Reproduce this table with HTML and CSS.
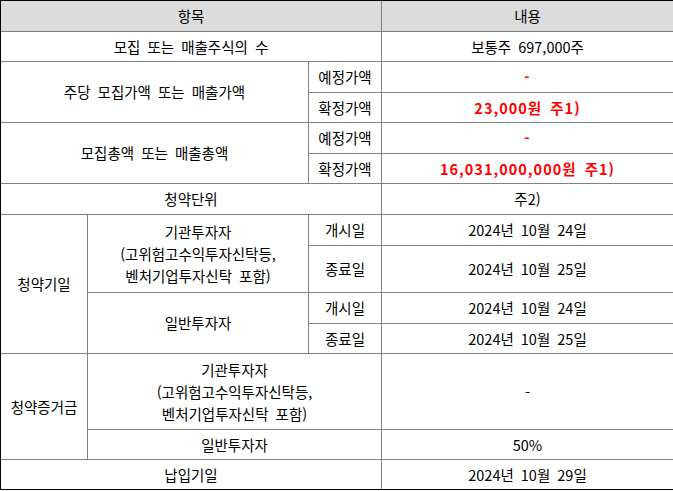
FILE: index.html
```html
<!DOCTYPE html>
<html lang="ko">
<head>
<meta charset="utf-8">
<link rel="stylesheet" href="styles.css">
</head>
<body>
<div class="sheet">
  <div class="c h cs3">항목</div>
  <div class="c h">내용</div>

  <div class="c cs3">모집 또는 매출주식의 수</div>
  <div class="c">보통주 697,000주</div>

  <div class="c cs2 rs2">주당 모집가액 또는 매출가액</div>
  <div class="c">예정가액</div>
  <div class="c red">-</div>
  <div class="c">확정가액</div>
  <div class="c red">23,000원 주1)</div>

  <div class="c cs2 rs2">모집총액 또는 매출총액</div>
  <div class="c">예정가액</div>
  <div class="c red">-</div>
  <div class="c">확정가액</div>
  <div class="c red">16,031,000,000원 주1)</div>

  <div class="c cs3">청약단위</div>
  <div class="c">주2)</div>

  <div class="c rs4">청약기일</div>
  <div class="c rs2">기관투자자<br>(고위험고수익투자신탁등,<br>벤처기업투자신탁 포함)</div>
  <div class="c">개시일</div>
  <div class="c">2024년 10월 24일</div>
  <div class="c">종료일</div>
  <div class="c">2024년 10월 25일</div>
  <div class="c rs2">일반투자자</div>
  <div class="c">개시일</div>
  <div class="c">2024년 10월 24일</div>
  <div class="c">종료일</div>
  <div class="c">2024년 10월 25일</div>

  <div class="c rs2">청약증거금</div>
  <div class="c cs2">기관투자자<br>(고위험고수익투자신탁등,<br>벤처기업투자신탁 포함)</div>
  <div class="c">-</div>
  <div class="c cs2">일반투자자</div>
  <div class="c">50%</div>

  <div class="c cs3">납입기일</div>
  <div class="c">2024년 10월 29일</div>
</div>
</body>
</html>
```

FILE: styles.css
```css
html, body {
  margin: 0;
  padding: 0;
  background: #ffffff;
}

body {
  font-family: "Noto Sans CJK KR", "Noto Sans", sans-serif;
  font-size: 14.5px;
  color: #000000;
}

.sheet {
  display: grid;
  grid-template-columns: 86px 220px 72px 1fr;
  grid-template-rows: 30px 29px 30px 29px 30px 29px 30px 30px 46px 30px 29px 75px 29px 29px;
  gap: 1px;
  background: #808080;
  border-top: 1px solid #000000;
  border-left: 1px solid #000000;
  border-bottom: 1px solid #000000;
}

.c {
  background: #ffffff;
  display: flex;
  align-items: center;
  justify-content: center;
  text-align: center;
  line-height: 22px;
  word-spacing: 3px;
}

.h {
  background: #dcdcdc;
}

.red {
  color: #ff0000;
  font-weight: bold;
  letter-spacing: 1px;
}

.cs2 { grid-column: span 2; }
.cs3 { grid-column: span 3; }
.rs2 { grid-row: span 2; }
.rs4 { grid-row: span 4; }
```
